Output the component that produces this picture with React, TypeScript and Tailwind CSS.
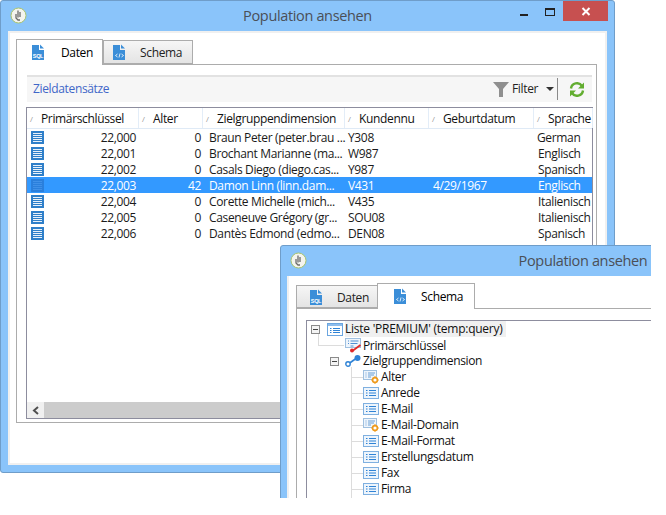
type Row = { id: string; age: string; name: string; code: string; birth: string; lang: string };

const rows: Row[] = [
  { id: "22,000", age: "0", name: "Braun Peter (peter.brau ...", code: "Y308", birth: "", lang: "German" },
  { id: "22,001", age: "0", name: "Brochant Marianne (ma...", code: "W987", birth: "", lang: "Englisch" },
  { id: "22,002", age: "0", name: "Casals Diego (diego.cas...", code: "Y987", birth: "", lang: "Spanisch" },
  { id: "22,003", age: "42", name: "Damon Linn (linn.dam...", code: "V431", birth: "4/29/1967", lang: "Englisch" },
  { id: "22,004", age: "0", name: "Corette Michelle (mich...", code: "V435", birth: "", lang: "Italienisch" },
  { id: "22,005", age: "0", name: "Caseneuve Grégory (gr...", code: "SOU08", birth: "", lang: "Italienisch" },
  { id: "22,006", age: "0", name: "Dantès Edmond (edmo...", code: "DEN08", birth: "", lang: "Spanisch" },
];

const columns = ["Primärschlüssel", "Alter", "Zielgruppendimension", "Kundennu", "Geburtdatum", "Sprache"];
const gridCols = "grid-cols-[112px_64px_142px_84px_105px_59px]";

function AppIcon() {
  return (
    <svg width="17" height="17" viewBox="0 0 17 17">
      <circle cx="8.5" cy="8.5" r="7.5" fill="#f4f4ee" stroke="#a9c46c" strokeWidth="1" />
      <path d="M8 3.5v7M10 5v5M6 7v4l2 2h2" fill="none" stroke="#6b6b6b" strokeWidth="1.3" />
    </svg>
  );
}

function FileIcon({ kind }: { kind: "sql" | "code" }) {
  return (
    <svg width="13" height="17" viewBox="0 0 13 17">
      <path d="M0 1h7v5h5v10H0z" fill="#3b8ed8" />
      <path d="M8 0.5l4 4H8z" fill="#3b8ed8" />
      {kind === "sql" ? (
        <text x="6" y="13.5" fontSize="5.5" fill="#fff" textAnchor="middle" fontFamily="Liberation Sans, sans-serif" fontWeight="700">
          SQL
        </text>
      ) : (
        <path d="M4.5 10l-2 1.5 2 1.5M8.5 10l2 1.5-2 1.5M7 9.5l-1 4" fill="none" stroke="#fff" strokeWidth="0.8" />
      )}
    </svg>
  );
}

function RecordIcon({ selected }: { selected: boolean }) {
  return (
    <svg width="13" height="13" viewBox="0 0 13 13" className="shrink-0">
      <rect width="13" height="13" fill={selected ? "#2a7fdc" : "#2f7fc9"} />
      <path d="M2 2.5h9M2 4.5h9M2 6.5h9M2 8.5h9M2 10.5h9" stroke={selected ? "#3f90e8" : "#e8f1fa"} strokeWidth="1" />
    </svg>
  );
}

function FieldIcon() {
  return (
    <svg width="16" height="12" viewBox="0 0 16 12" className="shrink-0">
      <rect x="0.5" y="0.5" width="15" height="11" fill="#eef5fc" stroke="#7fb0e0" />
      <path d="M3 3.5h1.5M3 6h1.5M3 8.5h1.5M6 3.5h7M6 6h7M6 8.5h7" stroke="#2f83d6" strokeWidth="1" />
    </svg>
  );
}

function ComputedFieldIcon() {
  return (
    <svg width="16" height="14" viewBox="0 0 16 14" className="shrink-0">
      <rect x="0.5" y="0.5" width="13" height="9" fill="#eef5fc" stroke="#9fc0e0" />
      <path d="M2.5 3h1M2.5 5h1M2.5 7h1M5 3h7M5 5h6M5 7h3" stroke="#6b9fd4" strokeWidth="1" />
      <circle cx="12" cy="10" r="2.4" fill="#fff" stroke="#ee9a1c" strokeWidth="1.6" />
      <path d="M12 6.2v1.2M12 12.6v1.2M8.2 10h1.2M14.6 10h1.2" stroke="#ee9a1c" strokeWidth="1.2" />
    </svg>
  );
}

function KeyFieldIcon() {
  return (
    <svg width="17" height="15" viewBox="0 0 17 15" className="shrink-0">
      <rect x="0.5" y="0.5" width="15" height="9" fill="#eef5fc" stroke="#9fc0e0" />
      <path d="M3 3h1M3 5.5h1M5.5 3h8M5.5 5.5h7M5.5 8h3" stroke="#4f8fd4" strokeWidth="1" />
      <path d="M8 12.5l7.5-5.5" stroke="#e02828" strokeWidth="1.8" />
      <circle cx="7" cy="12.5" r="2" fill="#e02828" />
    </svg>
  );
}

function LinkIcon() {
  return (
    <svg width="16" height="12" viewBox="0 0 16 12" className="shrink-0">
      <path d="M4 8.5L11 3.5" stroke="#2f83d6" strokeWidth="1.6" />
      <circle cx="3" cy="9" r="2.2" fill="#fff" stroke="#2f83d6" strokeWidth="1.4" />
      <circle cx="12.5" cy="3" r="3" fill="#2f83d6" />
    </svg>
  );
}

function ListIcon() {
  return (
    <svg width="16" height="13" viewBox="0 0 16 13" className="shrink-0">
      <rect x="0.5" y="0.5" width="15" height="12" fill="#fff" stroke="#6ba6e0" />
      <rect x="1" y="1" width="14" height="2" fill="#8dbcec" />
      <path d="M3 5.5h1.5M3 7.5h1.5M3 9.5h1.5M6 5.5h7M6 7.5h7M6 9.5h7" stroke="#2f83d6" strokeWidth="1" />
    </svg>
  );
}

function Expander() {
  return (
    <span className="flex h-[9px] w-[9px] shrink-0 items-center justify-center border border-[#8a8a8a] bg-[#f4f4f4]">
      <span className="h-px w-[5px] bg-[#444]" />
    </span>
  );
}

function WindowFrame({ className, children }: { className: string; children: React.ReactNode }) {
  return (
    <div className={`absolute rounded-[3px] border border-[#6f9dc9] bg-[#8ac4fa] ${className}`}>
      <div className="relative flex h-[30px] items-center justify-center text-[14.5px] text-[#4a4f57]">
        <span className="absolute left-[9px] top-[6px]">
          <AppIcon />
        </span>
        Population ansehen
      </div>
      {children}
    </div>
  );
}

function Tab({ label, kind, active, className, gap }: { label: string; kind: "sql" | "code"; active: boolean; className: string; gap: string }) {
  return (
    <div
      className={`flex items-center border border-[#acacac] ${
        active ? "relative z-10 -mb-px border-b-0 bg-white pb-px text-black" : "bg-gradient-to-b from-[#f6f6f6] to-[#e4e4e4] text-[#222]"
      } ${className}`}
    >
      <FileIcon kind={kind} />
      <span className={`pt-px ${gap}`}>{label}</span>
    </div>
  );
}

function DataTable() {
  return (
    <div className="ml-[9px] mr-[3px] mt-[5px] flex h-[312px] flex-col border border-[#8d8d9e]">
      <div className={`grid h-[21px] ${gridCols} border-b border-[#dfeaf6] text-[#111]`}>
        {columns.map((c) => (
          <div key={c} className="flex items-center overflow-hidden whitespace-nowrap border-r border-[#e3edf8] pl-[3px] pt-px">
            <span className="w-[11px] shrink-0 text-[8px] text-[#999]">/</span>
            <span>{c}</span>
          </div>
        ))}
      </div>
      <div className="flex-1">
        {rows.map((r) => {
          const selected = r.id === "22,003";
          return (
            <div key={r.id} className={`grid h-4 ${gridCols} items-center whitespace-nowrap ${selected ? "bg-[#3399ff] text-white" : "text-[#1a1a1a]"}`}>
              <div className="flex items-center justify-between pl-1 pr-[3px]">
                <RecordIcon selected={selected} />
                <span className="pt-px">{r.id}</span>
              </div>
              <div className="pr-[2px] pt-px text-right">{r.age}</div>
              <div className="pl-[6px] pt-px">{r.name}</div>
              <div className="pl-[3px] pt-px">{r.code}</div>
              <div className="pl-[4px] pt-px">{r.birth}</div>
              <div className={`overflow-hidden pt-px ${r.lang === "German" ? "pl-[3px]" : "pl-[4px]"}`}>{r.lang}</div>
            </div>
          );
        })}
      </div>
      <div className="flex h-4 bg-[#cccccc]">
        <div className="flex w-[17px] items-center justify-center bg-[#f0f0f0]">
          <svg width="8" height="9" viewBox="0 0 8 9">
            <path d="M6 1L2 4.5 6 8" fill="none" stroke="#505050" strokeWidth="2" />
          </svg>
        </div>
      </div>
    </div>
  );
}

function Toolbar() {
  return (
    <div className="ml-[10px] mr-[4px] mt-[10px] flex h-[27px] items-center border-t-2 border-[#e2e2e2] bg-[#f6f6f6] pl-[6px] pb-px text-[#222]">
      <span className="text-[#3f66c8]">Zieldatensätze</span>
      <div className="ml-auto flex items-center">
        <svg width="16" height="15" viewBox="0 0 16 15">
          <path d="M0 0h16L10 7v8H6V7z" fill="#8f8f8f" />
        </svg>
        <span className="ml-[3px] w-[27px]">Filter</span>
        <svg width="8" height="4" viewBox="0 0 8 4" className="ml-[7px]">
          <path d="M0 0h8L4 4z" fill="#333" />
        </svg>
        <span className="ml-[3px] h-[22px] w-px bg-[#8a8a8a]" />
        <svg width="16" height="15" viewBox="0 0 16 15" className="ml-[11px] mr-[7px]">
          <path d="M2 6.5A6 6 0 0 1 13 4" fill="none" stroke="#62ad30" strokeWidth="2.4" />
          <path d="M15 0.5v6h-6z" fill="#62ad30" />
          <path d="M14 8.5A6 6 0 0 1 3 11" fill="none" stroke="#62ad30" strokeWidth="2.4" />
          <path d="M1 14.5v-6h6z" fill="#62ad30" />
        </svg>
      </div>
    </div>
  );
}

const fields = [
  { label: "Alter", computed: true },
  { label: "Anrede", computed: false },
  { label: "E-Mail", computed: false },
  { label: "E-Mail-Domain", computed: true },
  { label: "E-Mail-Format", computed: false },
  { label: "Erstellungsdatum", computed: false },
  { label: "Fax", computed: false },
  { label: "Firma", computed: false },
];

function SchemaTree() {
  return (
    <div className="relative ml-[9px] mt-[11px] h-[300px] border-l border-t border-[#8d8d9e] text-[#111]">
      <span className="absolute left-[11px] top-[13px] h-[12px] w-px bg-[#dcdcdc]" />
      <span className="absolute left-[11px] top-[24px] h-px w-[26px] bg-[#dcdcdc]" />
      <span className="absolute left-[44px] top-[46px] h-[160px] w-px bg-[#dcdcdc]" />
      <div className="flex h-4 items-center pl-1">
        <Expander />
        <span className="ml-[7px]">
          <ListIcon />
        </span>
        <span className="ml-[2px] bg-[#f0f0f0] pr-[3px] leading-4 tracking-[-0.25px]">Liste 'PREMIUM' (temp:query)</span>
      </div>
      <div className="mt-px flex h-[15px] items-center pl-[38px]">
        <KeyFieldIcon />
        <span className="ml-px">Primärschlüssel</span>
      </div>
      <div className="flex h-4 items-center pl-[23px]">
        <Expander />
        <span className="ml-[6px]">
          <LinkIcon />
        </span>
        <span className="ml-[2px]">Zielgruppendimension</span>
      </div>
      {fields.map((f) => (
        <div key={f.label} className="flex h-4 items-center pl-[44px]">
          <span className="h-px w-[12px] bg-[#dcdcdc]" />
          {f.computed ? <ComputedFieldIcon /> : <FieldIcon />}
          <span className="ml-[2px]">{f.label}</span>
        </div>
      ))}
    </div>
  );
}

export default function App() {
  return (
    <div className="relative h-[515px] w-[666px] overflow-hidden bg-white font-['Open_Sans','Noto_Sans',sans-serif] text-[12px] leading-4 tracking-[-0.35px]">
      <WindowFrame className="left-0 top-0 h-[473px] w-[615px]">
        <div className="absolute right-[6px] top-0 flex h-[20px] w-[45px] items-center justify-center bg-[#c75050]">
          <svg width="10" height="9" viewBox="0 0 10 9">
            <path d="M1.5 1l7 7M8.5 1l-7 7" stroke="#fff" strokeWidth="2" />
          </svg>
        </div>
        <span className="absolute left-[519px] top-[13px] h-[2px] w-[8px] bg-[#222]" />
        <span className="absolute left-[544px] top-[7px] h-[8px] w-[10px] border border-t-2 border-[#222]" />
        <div className="mx-[7px] h-[434px] border-2 border-[#f0f0f0] bg-white pl-[6px] pr-[8px] pt-[6px]">
          <div className="flex h-[25px] items-end">
            <Tab label="Daten" kind="sql" active gap="ml-[16px]" className="h-[26px] w-[87px] pl-[15px]" />
            <Tab label="Schema" kind="code" active={false} gap="ml-[14px]" className="h-[24px] w-[90px] pl-[9px]" />
          </div>
          <div className="h-[359px] border border-[#acacac]">
            <Toolbar />
            <DataTable />
          </div>
        </div>
      </WindowFrame>

      <div className="absolute left-[280px] top-[245px] h-[253px] w-[371px] overflow-hidden">
        <WindowFrame className="left-0 top-0 h-[300px] w-[606px]">
          <div className="ml-[6px] h-[300px] border-l-2 border-[#f0f0f0] bg-white pl-[7px] pt-[6px]">
            <div className="flex h-[26px] items-end">
              <Tab label="Daten" kind="sql" active={false} gap="ml-[14px]" className="h-[23px] w-[82px] pl-[13px] pt-px" />
              <Tab label="Schema" kind="code" active gap="ml-[14px]" className="-ml-px h-[26px] w-[98px] pl-[16px] pt-px" />
            </div>
            <div className="h-[250px] border-l border-t border-[#acacac]">
              <SchemaTree />
            </div>
          </div>
        </WindowFrame>
      </div>
    </div>
  );
}
